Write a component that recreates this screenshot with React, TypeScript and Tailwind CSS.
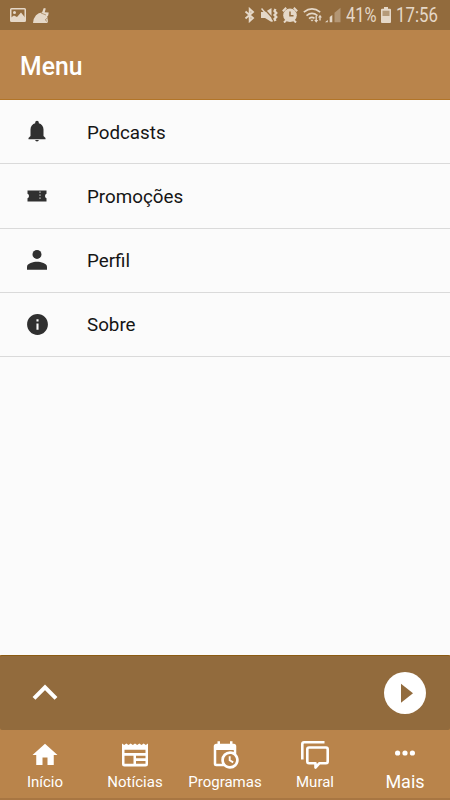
import type { ReactNode } from "react";

// Material shapes, all on a 24px grid
function Icon({ className, children }: { className?: string; children: ReactNode }) {
  return (
    <svg viewBox="0 0 24 24" fill="currentColor" className={className}>
      {children}
    </svg>
  );
}

const MENU = [
  {
    label: "Podcasts",
    icon: (
      <Icon className="mb-[1px] mr-[1px] h-[24px] w-[24px]">
        <path d="M20.500 19v1.200h-17V19l2-2v-6.500c0-3.100 2-5.500 4.700-6.200V3.500a1.800 1.800 0 0 1 3.600 0v.8c2.700.7 4.700 3.100 4.700 6.200V17l2 2m-6.700 2a1.800 1.500 0 0 1-3.600 0" />
      </Icon>
    ),
  },
  {
    label: "Promoções",
    icon: (
      <svg viewBox="0 0 20 12" fill="currentColor" className="mr-[1px] h-[12px] w-[20px]">
        <path
          fillRule="evenodd"
          d="M.5.500h19v3.300q-1.500.5-1.500 2.200t1.500 2.200v3.300H.5V8.200Q2 7.700 2 6T.5 3.800zM12.500 1.500v1.300h1V1.500zm0 3v1.300h1V4.500zm0 3v1.300h1V7.500z"
        />
      </svg>
    ),
  },
  {
    label: "Perfil",
    icon: (
      <Icon className="mr-[1px] h-[30px] w-[30px]">
        <circle cx="12" cy="7.500" r="3.600" />
        <path d="M12 13.400c-3 0-8 1.200-8 4V19.800h16v-2.400c0-2.800-5-4-8-4z" />
      </Icon>
    ),
  },
  {
    label: "Sobre",
    icon: (
      <Icon className="h-[25px] w-[25px]">
        <path d="M12 2C6.480 2 2 6.480 2 12s4.480 10 10 10 10-4.480 10-10S17.520 2 12 2zm1 15h-2v-6h2v6zm0-8h-2V7h2v2z" />
      </Icon>
    ),
  },
];

const TABS = [
  {
    label: "Início",
    icon: (
      <Icon className="h-[30px] w-[30px]">
        <path d="M10 20v-6h4v6h5v-8h3L12 3 2 12h3v8z" />
      </Icon>
    ),
  },
  {
    label: "Notícias",
    icon: (
      <svg viewBox="0 0 26 24" fill="currentColor" className="h-[24px] w-[26px]">
        <path
          fillRule="evenodd"
          d="M0 .5l2.200 1.500L4.300.5l2.200 1.500L8.700.5l2.100 1.500L13 .5l2.200 1.500L17.300.5l2.200 1.500L21.700.5l2.100 1.500L26 .5v20.500q0 2.500-2.500 2.500h-21Q0 23.500 0 21zM2.500 6.800v3.300h21V6.800zM2.500 12.700v8.100H11.500v-8.100zM14 12.700v2.500h9.500v-2.500zM14 18v2.800h9.500V18z"
        />
      </svg>
    ),
  },
  {
    label: "Programas",
    icon: (
      <Icon className="h-[30px] w-[30px]">
        <path d="M15 13h1.500v2.820l2.440 1.410-.75 1.300L15 16.690V13m4-5H5v11h4.670c-.43-.91-.67-1.930-.67-3a7 7 0 0 1 7-7c1.070 0 2.090.24 3 .67V8M5 21a2 2 0 0 1-2-2V5c0-1.110.89-2 2-2h1V1h2v2h8V1h2v2h1a2 2 0 0 1 2 2v6.100c1.240 1.260 2 2.990 2 4.900a7 7 0 0 1-7 7c-1.910 0-3.640-.76-4.900-2H5m11-9.850A4.850 4.850 0 0 0 11.150 16c0 2.680 2.170 4.850 4.850 4.850A4.850 4.850 0 0 0 20.850 16c0-2.680-2.170-4.850-4.850-4.850z" />
      </Icon>
    ),
  },
  {
    label: "Mural",
    icon: (
      <svg
        viewBox="0 0 28 28"
        fill="none"
        stroke="currentColor"
        strokeWidth="2.600"
        strokeLinejoin="round"
        className="h-[28px] w-[28px]"
      >
        <path d="M1.300 18.500V3q0-1.700 1.700-1.700h20.500" />
        <path d="M8 6.500h17q1.700 0 1.700 1.700v12.300q0 1.700-1.700 1.700h-6.500L14.500 26.500v-4.300H8q-1.700 0-1.700-1.700V8.200Q6.300 6.500 8 6.500z" />
      </svg>
    ),
  },
  {
    label: "Mais",
    active: true,
    icon: (
      <svg viewBox="0 0 20 6" fill="currentColor" className="h-[6px] w-[20px]">
        <circle cx="2.600" cy="3" r="2.600" />
        <circle cx="10" cy="3" r="2.600" />
        <circle cx="17.400" cy="3" r="2.600" />
      </svg>
    ),
  },
];

function StatusBar() {
  return (
    <div className="flex h-[30px] items-center bg-[#926b3d] pl-[10px] text-[#e5d8c8]">
      <svg viewBox="0 0 16 14" className="h-[14px] w-[16px]">
        <path
          fill="currentColor"
          fillRule="evenodd"
          d="M1.500 0h13Q16 0 16 1.500v11q0 1.500-1.500 1.500h-13Q0 14 0 12.500v-11Q0 0 1.500 0zM1.500 1.500v9h13v-9zM3 4.500a1.500 1.500 0 1 0 3 0 1.500 1.500 0 1 0-3 0z"
        />
        <path fill="currentColor" d="M1 12V9.500L4 7.500l3 1.500 4-4.500 4 5V12z" />
      </svg>
      <svg viewBox="0 0 16 15" fill="currentColor" className="ml-[7px] h-[15px] w-[16px]">
        <path d="M0 15Q.5 10 3 7.300t6-2.800L10.800 0l2 .6L11.700 4.200l4 .3-.5 3-1 1 .5 3 .3 2.500-1 1z" />
        <path d="M8 5l5 2M14.200 10l-2 2 2 1.500" fill="none" stroke="#926b3d" strokeWidth=".6" />
      </svg>

      {/* status icons on the right */}
      <svg viewBox="0 0 11 16" fill="none" stroke="currentColor" strokeWidth="1.900" className="ml-[195px] h-[16px] w-[11px]">
        <path d="M1.500 4.500l7.500 6.500L5.700 14V2L9 5 1.500 11.500" />
      </svg>
      <svg viewBox="0 0 17 16" fill="none" stroke="currentColor" className="ml-[6px] h-[16px] w-[17px]">
        <path fill="currentColor" stroke="none" d="M0 5h4l6.500-4v14L4 11H0z" />
        <path d="M2 .5l10.500 11.500" stroke="#926b3d" strokeWidth="1.200" />
        <path d="M.5 1.500l11 13" strokeWidth="1.500" />
        <path d="M14.500 2l-1 2 1.800 2-1.800 2 1.800 2-1.800 2 1 2" strokeWidth="2.300" />
      </svg>
      <svg viewBox="0 0 16 16" fill="none" stroke="currentColor" className="ml-[4px] h-[16px] w-[16px]">
        <circle cx="8" cy="8.200" r="6.800" fill="currentColor" stroke="none" />
        <path d="M.8 4.200l3.400-3.400M15.200 4.200L11.800.8M2 15.500l2.500-2.500M14 15.500L11.500 13" strokeWidth="2" />
        <path d="M8 4.500v4.200h3.500" stroke="#926b3d" strokeWidth="1.500" />
      </svg>
      <svg viewBox="0 0 20 16" fill="none" stroke="currentColor" strokeWidth="1.700" className="ml-[5px] h-[16px] w-[20px]">
        <path d="M.8 5.200q8.200-6.500 16.400 0M3.500 8.700q5.500-4.500 11 0M6 11.700q2.800-2.300 5.500-.3" />
        <path fill="currentColor" stroke="none" d="M7.300 12.800h3.400L9 14.500zM12.500 9h1.400v4h1.300l-2 2.700-2-2.700h1.300zM16.300 13.500v-3H15l2-2.700 2 2.700h-1.300v3z" />
      </svg>
      <svg viewBox="0 0 16 16" fill="currentColor" className="ml-[2px] h-[16px] w-[16px]">
        <path d="M0 15.200l2.800-2.200v2.200zM4.700 15.200v-5.200L7.300 8v7.200z" />
        <path d="M9.500 15.200V5.700L15.500.7v14.500z" opacity=".4" />
      </svg>
      <span className="ml-[5px] w-[31px] origin-left scale-x-[.82] whitespace-nowrap text-[20px] leading-none">41%</span>
      <svg viewBox="0 0 10 16" className="ml-[4px] h-[16px] w-[10px]">
        <path fill="currentColor" d="M3 0h4v1.700h2q1 0 1 1v12.300q0 1-1 1H1q-1 0-1-1V2.700q0-1 1-1h2z" />
        <path fill="#b59a79" d="M1.500 3.700h7V9h-7z" />
      </svg>
      <span className="ml-[5px] w-[42px] origin-left scale-x-[.84] whitespace-nowrap text-[20px] leading-none">17:56</span>
    </div>
  );
}

export default function App() {
  return (
    <div className="flex h-[800px] w-[450px] flex-col overflow-hidden bg-[#fbfbfb] font-['Roboto',sans-serif]">
      <StatusBar />
      <header className="flex h-[70px] items-center border-b border-[#b27528] bg-[#b9844b] pl-[20px] pt-[4px]">
        <h1 className="origin-left scale-x-[.97] text-[25.500px] font-medium leading-none text-white">Menu</h1>
      </header>

      <nav className="flex-1">
        {MENU.map((item) => (
          <a key={item.label} className="flex h-[64.25px] items-center border-b border-[#dadada] text-[#303030]">
            <span className="flex w-[75px] items-center justify-center">{item.icon}</span>
            <span className="pl-[12px] pt-[2px] text-[18.800px] text-[#151515]">{item.label}</span>
          </a>
        ))}
      </nav>

      <div className="bg-[#b9844b]">
        <div className="flex h-[75px] items-center justify-between rounded-[2px] border-t border-[#8b5b13] bg-[#926b3d] pl-[32px] pr-[24px] text-white">
          <svg viewBox="0 0 26 16" fill="none" stroke="currentColor" strokeWidth="4" className="mb-[2px] h-[16px] w-[26px]">
            <path d="M2 14.300L13 3.300l11 11" />
          </svg>
          <svg viewBox="0 0 42 42" className="mb-px h-[42px] w-[42px]">
            <circle cx="21" cy="21" r="21" fill="white" />
            <path d="M17 11.800v19l12-9.500z" fill="#926b3d" />
          </svg>
        </div>
      </div>

      <footer className="grid h-[70px] grid-cols-5 border-b-2 border-[#a87642] bg-[#b9844b] text-white">
        {TABS.map((tab) => (
          <a key={tab.label} className="flex flex-col items-center pt-[10px]">
            <span className={tab.active ? "flex h-[26px] items-center" : "flex h-[30px] items-center"}>{tab.icon}</span>
            <span className={tab.active ? "mt-[6px] text-[18px] leading-5" : "mt-[2px] text-[15px] leading-5"}>
              {tab.label}
            </span>
          </a>
        ))}
      </footer>
    </div>
  );
}
